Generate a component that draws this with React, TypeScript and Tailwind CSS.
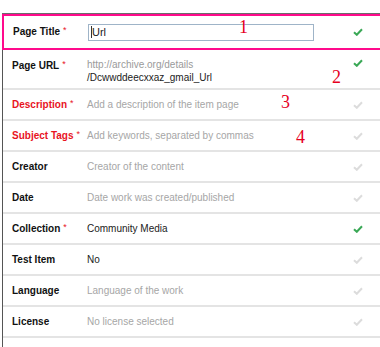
import React from 'react';

const Check = ({ on }: { on?: boolean }) => (
  <svg width="10" height="8" viewBox="0 0 10 8" className="block">
    <path d="M1 4.2 L3.8 6.8 L9 1.2" fill="none" stroke={on ? '#3aa856' : '#dcdcdc'} strokeWidth="2" />
  </svg>
);

type Row = { label: string; required?: boolean; red?: boolean; value: string; filled?: boolean; ok?: boolean };

const rows: Row[] = [
  { label: 'Description', required: true, red: true, value: 'Add a description of the item page' },
  { label: 'Subject Tags', required: true, red: true, value: 'Add keywords, separated by commas' },
  { label: 'Creator', value: 'Creator of the content' },
  { label: 'Date', value: 'Date work was created/published' },
  { label: 'Collection', required: true, value: 'Community Media', filled: true, ok: true },
  { label: 'Test Item', value: 'No', filled: true },
  { label: 'Language', value: 'Language of the work' },
  { label: 'License', value: 'No license selected' },
];

function Label({ r }: { r: Row }) {
  return (
    <div className={`w-[75px] shrink-0 text-[10px] font-bold ${r.red ? 'text-[#e8141e]' : 'text-[#111]'}`}>
      {r.label}
      {r.required && <span className="text-[#e8141e] font-normal text-[9px] relative -top-[2px] ml-[3px]">*</span>}
    </div>
  );
}

export default function App() {
  return (
    <div className="relative w-[380px] h-[347px] overflow-hidden bg-white font-['Liberation_Sans',Arial,sans-serif]">
      <div className="pt-[13px] pl-[2px] w-[400px]">
        <div className="border-t border-[#6b6b6b]">
          {/* highlighted title row */}
          <div className="h-[36px] border-2 border-[#ff0a8c] flex items-center pl-[9px] pr-[35px]">
            <Label r={{ label: 'Page Title', required: true, value: '' }} />
            <div className="flex-1">
              <div className="w-[226px] h-[17px] border border-[#9fb4c8] flex items-center pl-[2px] text-[11px] text-[#222]">
                <span className="w-px h-[12px] bg-[#333]" />Url
              </div>
            </div>
            <Check on />
          </div>
        </div>
        <div className="border-l border-[#555]">
          <div className="h-[40px] border-b-2 border-[#e4e4e4] flex items-start pt-[8px] pl-[9px] pr-[37px]">
            <Label r={{ label: 'Page URL', required: true, value: '' }} />
            <div className="flex-1 text-[10px] leading-[13px]">
              <div className="text-[#9a9a9a]">http://archive.org/details</div>
              <div className="text-[#222]">/Dcwwddeecxxaz_gmail_Url</div>
            </div>
            <div className="pt-[1px]"><Check on /></div>
          </div>
          {rows.map((r) => (
            <div key={r.label} className="h-[31px] border-b-2 border-[#e4e4e4] flex items-center pl-[9px] pr-[37px]">
              <Label r={r} />
              <div className={`flex-1 text-[10px] ${r.filled ? 'text-[#222]' : 'text-[#a6a6a6]'}`}>{r.value}</div>
              <Check on={r.ok} />
            </div>
          ))}
          <div className="h-[20px]" />
        </div>
      </div>
      <span className="absolute left-[239px] top-[14px] text-[18px] text-[#e6001e] font-['Liberation_Serif',serif]">1</span>
      <span className="absolute left-[332px] top-[64px] text-[18px] text-[#e6001e] font-['Liberation_Serif',serif]">2</span>
      <span className="absolute left-[281px] top-[89px] text-[18px] text-[#e6001e] font-['Liberation_Serif',serif]">3</span>
      <span className="absolute left-[296px] top-[124px] text-[18px] text-[#e6001e] font-['Liberation_Serif',serif]">4</span>
    </div>
  );
}
